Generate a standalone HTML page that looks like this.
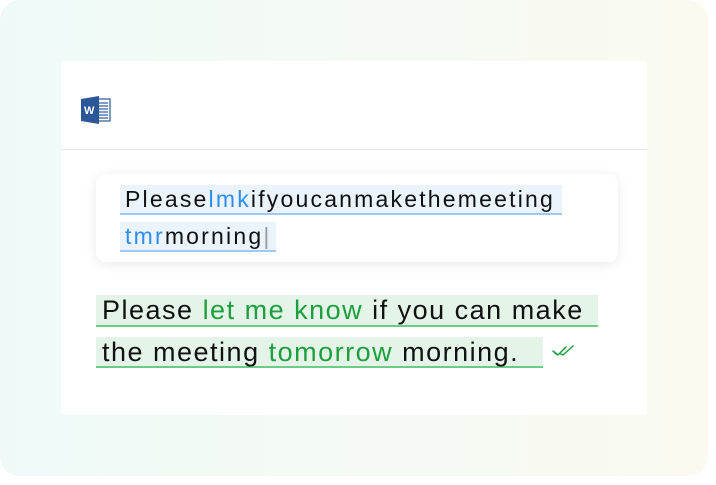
<!DOCTYPE html>
<html><head><style>
body{margin:0;width:716px;height:485px;background:#fff;font-family:"Liberation Sans",sans-serif;position:relative;overflow:hidden}
.bg{position:absolute;left:0;top:0;width:708px;height:476px;border-radius:20px;background:linear-gradient(90deg,#effaf8 0%,#f6faf4 60%,#fafaf0 100%)}
.card{position:absolute;left:61px;top:61px;width:586px;height:354px;background:#fff;border-radius:4px}
.hr{position:absolute;left:61px;top:149px;width:586px;height:1px;background:#e4e6e8}
.inner{position:absolute;left:96px;top:174px;width:522px;height:88px;background:#fff;border-radius:10px;box-shadow:0 2px 12px rgba(0,0,0,0.09)}
.b{position:absolute;background:#ebf4fd;border-bottom:2px solid #9ccaf5;font-size:23px;letter-spacing:2.2px;color:#111;line-height:28px;box-sizing:border-box;padding-left:5px;white-space:nowrap}
.b i{font-style:normal;color:#2b8ef0}
.g{position:absolute;background:#e5f4e8;border-bottom:2px solid #6ccb85;font-size:27px;letter-spacing:1.5px;color:#111;line-height:30px;box-sizing:border-box;padding-left:6px;white-space:nowrap}
.g i{font-style:normal;color:#1ca03e}
</style></head><body>
<div class="bg"></div>
<div class="card"></div>
<div class="hr"></div>
<svg style="position:absolute;left:81px;top:96px" width="30" height="28" viewBox="0 0 30 28">
<rect x="11" y="3" width="18" height="22" fill="#fff" stroke="#2b579a" stroke-width="1.2"/>
<g stroke="#2b579a" stroke-width="1.2"><line x1="17" y1="7" x2="27" y2="7"/><line x1="17" y1="10" x2="27" y2="10"/><line x1="17" y1="13" x2="27" y2="13"/><line x1="17" y1="16" x2="27" y2="16"/><line x1="17" y1="19" x2="27" y2="19"/><line x1="17" y1="22" x2="27" y2="22"/></g>
<path d="M0 3 L18 0 L18 28 L0 25 Z" fill="#2b579a"/>
<text x="3" y="18" font-family="Liberation Sans" font-weight="bold" font-size="11" fill="#fff">W</text>
</svg>
<div class="inner"></div>
<div class="b" style="left:120px;top:185px;width:442px;height:30px">Please<i>lmk</i>ifyoucanmakethemeeting</div>
<div class="b" style="left:120px;top:222px;width:156px;height:30px"><i>tmr</i>morning<span style="color:#999;letter-spacing:0">|</span></div>
<div class="g" style="left:96px;top:295px;width:502px;height:32px">Please <i>let me know</i> if you can make</div>
<div class="g" style="left:96px;top:337px;width:447px;height:31px">the meeting <i>tomorrow</i> morning.</div>
<svg style="position:absolute;left:552px;top:344px" width="28" height="14" viewBox="0 0 28 14">
<path d="M1 7 L6 11 L14 3 M9 10 L11 11 L21 2 M4 10 L1 7" fill="none" stroke="#1ca03e" stroke-width="1.5" stroke-linecap="round" stroke-linejoin="round"/>
</svg>
</body></html>
